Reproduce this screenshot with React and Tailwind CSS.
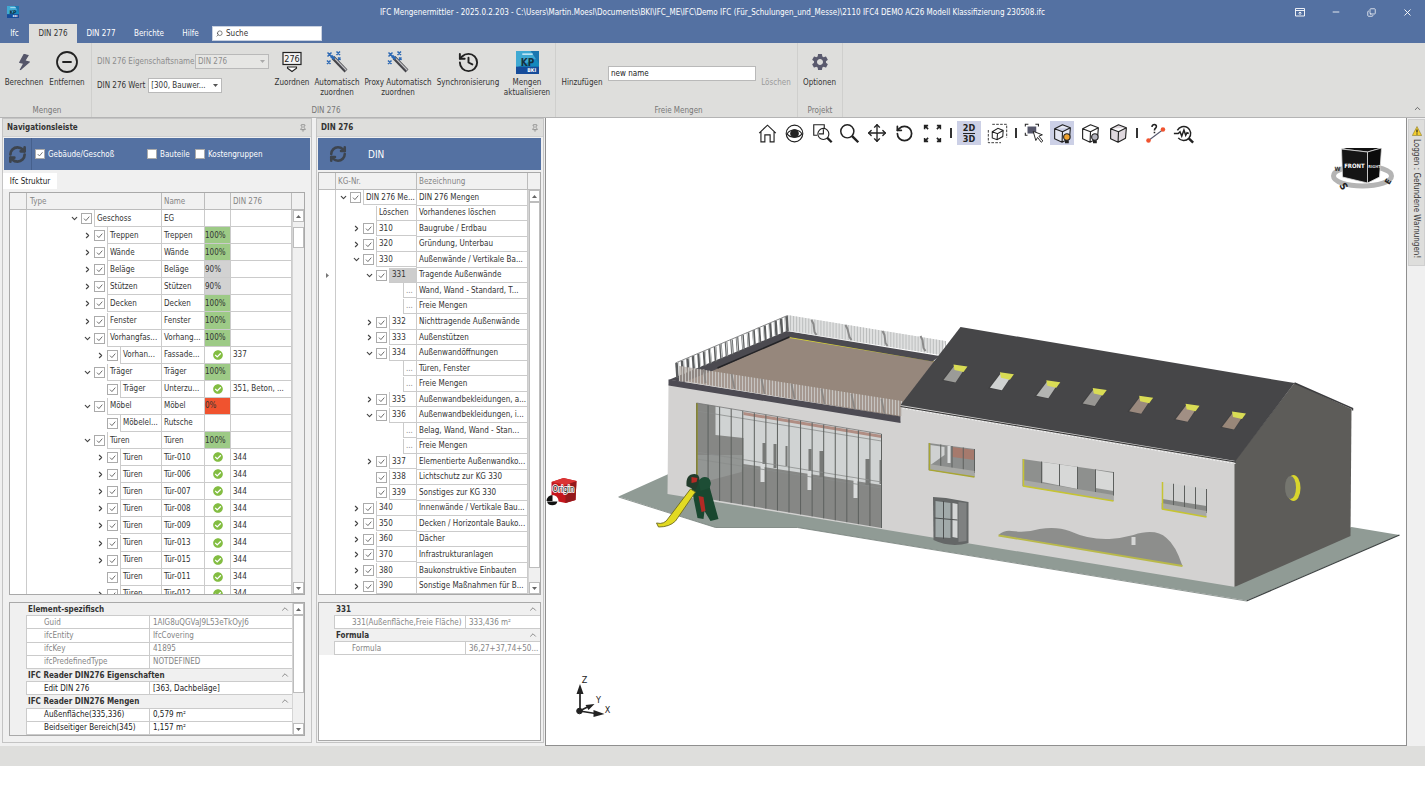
import React from 'react';
import { RefreshCw, CircleMinus, History, House, Search, Move, RotateCcw, ChevronDown, ChevronRight, ChevronUp, Pin, X, Minus, Copy } from 'lucide-react';
import { MdSettings } from 'react-icons/md';
import { BsLightningFill } from 'react-icons/bs';
import { FaCheckCircle } from 'react-icons/fa';

const NAV_ROWS = [
  { level: 0, open: true, type: 'Geschoss', name: 'EG' },
  { level: 1, open: false, type: 'Treppen', name: 'Treppen', pct: 100 },
  { level: 1, open: false, type: 'Wände', name: 'Wände', pct: 100 },
  { level: 1, open: false, type: 'Beläge', name: 'Beläge', pct: 90 },
  { level: 1, open: false, type: 'Stützen', name: 'Stützen', pct: 90 },
  { level: 1, open: false, type: 'Decken', name: 'Decken', pct: 100 },
  { level: 1, open: false, type: 'Fenster', name: 'Fenster', pct: 100 },
  { level: 1, open: true, type: 'Vorhangfas...', name: 'Vorhang...', pct: 100 },
  { level: 2, open: false, type: 'Vorhan...', name: 'Fassade...', ok: true, din: '337' },
  { level: 1, open: true, type: 'Träger', name: 'Träger', pct: 100 },
  { level: 2, type: 'Träger', name: 'Unterzu...', ok: true, din: '351, Beton, ...' },
  { level: 1, open: true, type: 'Möbel', name: 'Möbel', pct: 0 },
  { level: 2, type: 'Möbelel...', name: 'Rutsche' },
  { level: 1, open: true, type: 'Türen', name: 'Türen', pct: 100 },
  { level: 2, open: false, type: 'Türen', name: 'Tür-010', ok: true, din: '344' },
  { level: 2, open: false, type: 'Türen', name: 'Tür-006', ok: true, din: '344' },
  { level: 2, open: false, type: 'Türen', name: 'Tür-007', ok: true, din: '344' },
  { level: 2, open: false, type: 'Türen', name: 'Tür-008', ok: true, din: '344' },
  { level: 2, open: false, type: 'Türen', name: 'Tür-009', ok: true, din: '344' },
  { level: 2, open: false, type: 'Türen', name: 'Tür-013', ok: true, din: '344' },
  { level: 2, open: false, type: 'Türen', name: 'Tür-015', ok: true, din: '344' },
  { level: 2, type: 'Türen', name: 'Tür-011', ok: true, din: '344' },
  { level: 2, open: false, type: 'Türen', name: 'Tür-012', ok: true, din: '344' },
];

const DIN_ROWS = [
  { level: 0, open: true, check: true, nr: 'DIN 276 Me...', text: 'DIN 276 Mengen' },
  { level: 1, nr: 'Löschen', text: 'Vorhandenes löschen' },
  { level: 1, open: false, check: true, nr: '310', text: 'Baugrube / Erdbau' },
  { level: 1, open: false, check: true, nr: '320', text: 'Gründung, Unterbau' },
  { level: 1, open: true, check: true, nr: '330', text: 'Außenwände / Vertikale Ba...' },
  { level: 2, open: true, check: true, nr: '331', text: 'Tragende Außenwände', current: true },
  { level: 3, nr: '...', text: 'Wand, Wand - Standard, T...' },
  { level: 3, nr: '...', text: 'Freie Mengen' },
  { level: 2, open: false, check: true, nr: '332', text: 'Nichttragende Außenwände' },
  { level: 2, open: false, check: true, nr: '333', text: 'Außenstützen' },
  { level: 2, open: true, check: true, nr: '334', text: 'Außenwandöffnungen' },
  { level: 3, nr: '...', text: 'Türen, Fenster' },
  { level: 3, nr: '...', text: 'Freie Mengen' },
  { level: 2, open: false, check: true, nr: '335', text: 'Außenwandbekleidungen, a...' },
  { level: 2, open: true, check: true, nr: '336', text: 'Außenwandbekleidungen, i...' },
  { level: 3, nr: '...', text: 'Belag, Wand, Wand - Stan...' },
  { level: 3, nr: '...', text: 'Freie Mengen' },
  { level: 2, open: false, check: true, nr: '337', text: 'Elementierte Außenwandko...' },
  { level: 2, check: true, nr: '338', text: 'Lichtschutz zur KG 330' },
  { level: 2, check: true, nr: '339', text: 'Sonstiges zur KG 330' },
  { level: 1, open: false, check: true, nr: '340', text: 'Innenwände / Vertikale Bau...' },
  { level: 1, open: false, check: true, nr: '350', text: 'Decken / Horizontale Bauko...' },
  { level: 1, open: false, check: true, nr: '360', text: 'Dächer' },
  { level: 1, open: false, check: true, nr: '370', text: 'Infrastrukturanlagen' },
  { level: 1, open: false, check: true, nr: '380', text: 'Baukonstruktive Einbauten' },
  { level: 1, open: false, check: true, nr: '390', text: 'Sonstige Maßnahmen für B...' },
];

const ELEMENT_PROPS = [
  { group: 'Element-spezifisch' },
  { label: 'Guid', value: '1AIG8uQGVaJ9L53eTkOyJ6', readOnly: true },
  { label: 'ifcEntity', value: 'IfcCovering', readOnly: true },
  { label: 'ifcKey', value: '41895', readOnly: true },
  { label: 'ifcPredefinedType', value: 'NOTDEFINED', readOnly: true },
  { group: 'IFC Reader DIN276 Eigenschaften' },
  { label: 'Edit DIN 276', value: '[363, Dachbeläge]' },
  { group: 'IFC Reader DIN276 Mengen' },
  { label: 'Außenfläche(335,336)', value: '0,579 m²' },
  { label: 'Beidseitiger Bereich(345)', value: '1,157 m²' },
];

const DIN_PROPS = [
  { group: '331' },
  { label: '331(Außenfläche,Freie Fläche)', value: '333,436 m²', readOnly: true },
  { group: 'Formula' },
  { label: 'Formula', value: '36,27+37,74+50...', readOnly: true },
];

const INDENT = ['w-0', 'w-[13px]', 'w-[26px]', 'w-[40px]'];

const pctColor = (pct) => {
  if (pct === 100) return 'bg-[#9dca86]';
  if (pct === 0) return 'bg-[#f0532f]';
  return 'bg-[#d2d2d2]';
};

const Check = ({ label, size = 'size-[11px]', defaultChecked = true }) => (
  <span className={`relative block shrink-0 ${size}`}>
    <input
      type="checkbox"
      aria-label={label}
      defaultChecked={defaultChecked}
      className={`peer block appearance-none border border-[#ababab] bg-white ${size}`}
    />
    <svg viewBox="0 0 11 11" className="absolute inset-0 hidden size-full pointer-events-none peer-checked:block">
      <path d="M3 5.6 4.9 7.6 8.3 3.6" fill="none" stroke="#6e6e6e" strokeWidth="1" />
    </svg>
  </span>
);

const TreeCell = ({ row, text, check, current, base, rowH }) => (
  <div className={`flex items-stretch ${rowH}`}>
    <span className={`shrink-0 ${base}`} />
    <span className={`shrink-0 ${INDENT[row.level]}`} />
    <button className="w-[14px] shrink-0 flex items-center justify-center text-[#444]">
      {row.open === true && <ChevronDown className="size-[9px]" strokeWidth={3} />}
      {row.open === false && <ChevronRight className="size-[9px]" strokeWidth={3} />}
    </button>
    <span className="w-[13px] shrink-0 flex items-center">{check && <Check label={text} />}</span>
    <span
      className={`flex-1 min-w-0 flex items-center border-l border-b border-[#cbcbcb] pl-[2px] overflow-hidden ${
        current ? 'bg-[#cdcdcd]' : ''
      } ${text === '...' ? 'text-[#8a8a8a]' : ''}`}
    >
      {text}
    </span>
  </div>
);

const ScrollBar = ({ thumb }) => (
  <div className="flex flex-col bg-[#f0f0f0] w-[12px] shrink-0 border-l border-[#d5d5d5]">
    <button aria-label="Nach oben" className="h-[12px] shrink-0 bg-white border border-[#bdbdbd] flex items-center justify-center">
      <svg viewBox="0 0 5 3" className="w-[5px] h-[3px]"><path d="M0 3 2.5 0 5 3z" fill="#666" /></svg>
    </button>
    <div className="flex-1 flex flex-col">
      <div className={`bg-white border border-[#bdbdbd] ${thumb}`} />
    </div>
    <button aria-label="Nach unten" className="h-[12px] shrink-0 bg-white border border-[#bdbdbd] flex items-center justify-center">
      <svg viewBox="0 0 5 3" className="w-[5px] h-[3px]"><path d="M0 0 2.5 3 5 0z" fill="#666" /></svg>
    </button>
  </div>
);

const PropertyGrid = ({ rows, labelWidth, gutter, indent, height }) => (
  <table className={`w-full table-fixed border-separate border-spacing-0 bg-white ${height}`}>
    <colgroup>
      <col className={gutter} />
      <col className={labelWidth} />
      <col />
    </colgroup>
    <tbody>
      {rows.map((row, i) =>
        row.group ? (
          <tr key={i} className="bg-[#f0f0f0]">
            <td className="p-0 h-[13px]" />
            <th colSpan={2} className="p-0 pl-[2px] pr-[2px] border-b border-[#cbcbcb] text-left font-bold text-[#333]">
              <div className="flex items-center justify-between">
                {row.group}
                <ChevronUp className="size-[10px] text-[#777]" />
              </div>
            </th>
          </tr>
        ) : (
          <tr key={i} className={row.readOnly ? 'text-[#858585]' : 'text-[#222]'}>
            <td className="p-0 h-[13px] bg-[#f0f0f0]" />
            <td className={`p-0 border-l border-b border-[#cbcbcb] ${indent}`}>{row.label}</td>
            <td className="p-0 pl-[3px] border-l border-b border-[#cbcbcb]">{row.value}</td>
          </tr>
        )
      )}
    </tbody>
  </table>
);

const PanelHeader = ({ title }) => (
  <div className="h-[18px] shrink-0 flex items-center justify-between px-1 bg-[#dededc] border-b border-[#d0d0d0]">
    <h2 className="font-bold text-[#333]">{title}</h2>
    <button aria-label="Anheften"><Pin className="size-[8px] text-[#777]" /></button>
  </div>
);

const RibbonButton = ({ icon, lines, width, disabled }) => (
  <button
    disabled={disabled}
    className={`${width} shrink-0 flex flex-col items-center leading-[10px] text-[#333] disabled:text-[#9b9b9b]`}
  >
    <span className="h-[26px] flex items-center justify-center">{icon}</span>
    <span className="h-[10px] mt-[3px] whitespace-nowrap">{lines[0]}</span>
    {lines[1] && <span className="whitespace-nowrap">{lines[1]}</span>}
  </button>
);

const RibbonGroup = ({ caption, width, children }) => (
  <section className={`${width} shrink-0 flex flex-col border-r border-[#cfcfcd] pt-[6px]`}>
    <div className="flex-1 flex">{children}</div>
    <div className="h-[11px] text-center leading-[10px] text-[#777]">{caption}</div>
  </section>
);

const WandIcon = () => (
  <svg viewBox="0 0 22 22" className="size-[22px]">
    <path d="M7 6.500 20 20" stroke="#45454a" strokeWidth="4" />
    <path d="M8 6.600 20.300 19.200" stroke="#c4c4c8" strokeWidth="1.300" />
    <path d="M5 4.800 8.500 8" stroke="#2d69b4" strokeWidth="3" />
    <path d="M1.500 1.500l4 4m0-4-4 4M10.500.5l3.500 3.500m0-3.500-3.500 3.500M1 9.500l3.500 3.500m0-3.500L1 13M12 6.500l2.500 2.500m0-2.500L12 9" stroke="#2d69b4" strokeWidth="1.500" fill="none" />
  </svg>
);

const AssignIcon = () => (
  <svg viewBox="0 0 22 22" className="size-[22px]">
    <rect x="2" y="1.500" width="18" height="12" fill="#f5f5f5" stroke="#222" strokeWidth="1.200" />
    <text x="11" y="10.800" fontSize="9" textAnchor="middle" fill="#222">276</text>
    <path d="M6.500 16h9v1.200L11 20.500l-4.500-3.300z" fill="#fff" stroke="#222" strokeWidth="1.100" />
  </svg>
);

const BkiIcon = ({ size }) => (
  <svg viewBox="0 0 22 22" className={size}>
    <rect width="22" height="22" rx="1" fill="#1689bd" />
    <path d="M0 0h22v6L0 16z" fill="#3fa9d3" />
    <path d="M14 0h8v12z" fill="#1b76b0" />
    <path d="M0 15h22v7H0z" fill="#164c9a" />
    <path d="M6 3h10" stroke="#d9f2fb" strokeWidth="1.300" />
    <text x="11" y="14" fontSize="9.500" fontWeight="bold" textAnchor="middle" fill="#16313f">KP</text>
    <text x="15" y="20.500" fontSize="5" fontWeight="bold" textAnchor="middle" fill="#fff">BKI</text>
  </svg>
);

const TitleBar = () => (
  <header className="bg-[#5471a2] text-white h-[43px] shrink-0 flex flex-col">
    <div className="h-[24px] grid grid-cols-[1fr_auto_1fr] items-center">
      <div className="pl-[7px]"><BkiIcon size="size-[12px]" /></div>
      <h1 className="whitespace-nowrap">
        IFC Mengenermittler - 2025.0.2.203 - C:\Users\Martin.Moesl\Documents\BKI\IFC_ME\IFC\Demo IFC (Für_Schulungen_und_Messe)\2110 IFC4 DEMO AC26 Modell Klassifizierung 230508.ifc
      </h1>
      <div className="flex justify-end items-center gap-[26px] pr-3">
        <button aria-label="Menüband-Anzeige">
          <svg viewBox="0 0 10 10" className="size-[10px]" fill="none" stroke="#fff">
            <path d="M.5 1.500h9v7.500h-9zM.5 3.500h9M5 8V5M3.500 6.300 5 5l1.500 1.300" strokeWidth=".9" />
          </svg>
        </button>
        <button aria-label="Minimieren"><Minus className="size-[10px]" /></button>
        <button aria-label="Wiederherstellen"><Copy className="size-[9px] -scale-y-100" /></button>
        <button aria-label="Schließen"><X className="size-[11px]" /></button>
      </div>
    </div>
    <nav className="flex-1 flex">
      <button className="w-[29px]">Ifc</button>
      <button className="w-[48px] bg-[#dededc] text-[#333]">DIN 276</button>
      <button className="w-[48px]">DIN 277</button>
      <button className="w-[48px]">Berichte</button>
      <button className="w-[35px]">Hilfe</button>
      <label className="ml-1 mt-[2px] w-[110px] h-[15px] bg-white text-[#333] flex items-center gap-[3px] px-[3px] border border-[#c9d1e0]">
        <Search className="size-[7px] -scale-x-100 shrink-0" />
        <input aria-label="Suche" defaultValue="Suche" className="w-full min-w-0 outline-none" />
      </label>
    </nav>
  </header>
);

const Ribbon = () => (
  <div className="relative h-[75px] shrink-0 bg-[#dededc] flex border-b border-[#b4b4b4]">
    <RibbonGroup caption="Mengen" width="w-[92px] pl-[3px]">
      <RibbonButton width="w-[42px]" icon={<BsLightningFill className="size-[17px] rotate-12 text-[#55566a]" />} lines={['Berechnen']} />
      <RibbonButton width="w-[44px]" icon={<CircleMinus className="size-[24px] text-[#222]" strokeWidth={1.8} />} lines={['Entfernen']} />
    </RibbonGroup>
    <RibbonGroup caption="DIN 276" width="w-[464px] pl-[5px]">
      <div className="w-[172px] mr-[3px] pt-[5px] flex flex-col gap-[9px]">
        <div className="flex items-center text-[#8d8d8d]">
          <label htmlFor="propName" className="whitespace-nowrap flex-1">DIN 276 Eigenschaftsname</label>
          <span className="relative block">
            <select id="propName" disabled className="block appearance-none w-[74px] h-[15px] pl-[2px] border border-[#b9b9b9] bg-[#e6e6e4]">
              <option>DIN 276</option>
            </select>
            <svg viewBox="0 0 5 3" className="absolute right-[4px] top-[6px] w-[5px] h-[3px] pointer-events-none"><path d="M0 0 2.500 3 5 0z" fill="#aaa" /></svg>
          </span>
        </div>
        <div className="flex items-center gap-[3px] text-[#333]">
          <label htmlFor="propValue" className="whitespace-nowrap">DIN 276 Wert</label>
          <span className="relative block">
            <select id="propValue" className="block appearance-none w-[74px] h-[15px] pl-[2px] border border-[#b9b9b9] bg-white">
              <option>[300, Bauwer...</option>
            </select>
            <svg viewBox="0 0 5 3" className="absolute right-[4px] top-[6px] w-[5px] h-[3px] pointer-events-none"><path d="M0 0 2.500 3 5 0z" fill="#555" /></svg>
          </span>
        </div>
      </div>
      <RibbonButton width="w-[40px]" icon={<AssignIcon />} lines={['Zuordnen']} />
      <RibbonButton width="w-[50px]" icon={<WandIcon />} lines={['Automatisch', 'zuordnen']} />
      <RibbonButton width="w-[72px]" icon={<WandIcon />} lines={['Proxy Automatisch', 'zuordnen']} />
      <RibbonButton width="w-[68px]" icon={<History className="size-[23px] text-[#222]" strokeWidth={2} />} lines={['Synchronisierung']} />
      <RibbonButton width="w-[50px]" icon={<BkiIcon size="size-[23px]" />} lines={['Mengen', 'aktualisieren']} />
    </RibbonGroup>
    <RibbonGroup caption="Freie Mengen" width="w-[242px] pl-1">
      <RibbonButton width="w-[44px]" lines={['Hinzufügen']} />
      <input aria-label="Name der freien Menge" defaultValue="new name" className="ml-1 mr-[2px] mt-[17px] w-[148px] h-[15px] px-[2px] bg-white border border-[#b9b9b9] text-[#222]" />
      <RibbonButton width="w-[36px]" lines={['Löschen']} disabled />
    </RibbonGroup>
    <RibbonGroup caption="Projekt" width="w-[45px]">
      <RibbonButton width="w-[43px]" icon={<MdSettings className="size-[20px] text-[#5a5a6e]" />} lines={['Optionen']} />
    </RibbonGroup>
    <button aria-label="Menüband reduzieren" className="absolute right-[3px] bottom-1"><ChevronUp className="size-[9px] text-[#444]" /></button>
  </div>
);

const TH = 'p-0 h-[17px] text-left font-normal text-[#858585] bg-[#f1f1f1] border-b border-r border-[#bcbcbc]';
const TD = 'p-0 border-b border-r border-[#cbcbcb]';

const NavigationPanel = () => (
  <aside className="w-[310px] shrink-0 flex flex-col bg-[#f0f0f0] border border-[#c4c4c4]">
    <PanelHeader title="Navigationsleiste" />
    <div className="m-px h-[32px] shrink-0 bg-[#5471a2] text-white flex items-center">
      <button aria-label="Aktualisieren" className="w-[28px] h-full border-r border-[#46608c] flex items-center justify-center">
        <RefreshCw className="size-[19px] text-[#3d444e]" strokeWidth={3.4} />
      </button>
      <label className="flex items-center gap-[3px] ml-[3px] w-[112px]"><Check size="size-[10px]" />Gebäude/Geschoß</label>
      <label className="flex items-center gap-[3px] w-[48px]"><Check size="size-[10px]" defaultChecked={false} />Bauteile</label>
      <label className="flex items-center gap-[3px]"><Check size="size-[10px]" defaultChecked={false} />Kostengruppen</label>
    </div>
    <div className="flex h-[18px] shrink-0 items-end">
      <button className="h-[16px] w-[54px] bg-white text-[#222]">Ifc Struktur</button>
    </div>
    <div className="flex-1 min-h-0 pt-[3px] px-[6px] pb-[6px] flex flex-col gap-[7px]">
      <div className="flex-1 min-h-0 overflow-hidden border border-[#a9a9a9] bg-white flex flex-col">
        <div className="flex bg-[#f1f1f1]">
          <table className="flex-1 table-fixed border-separate border-spacing-0">
            <colgroup><col className="w-[17px]" /><col className="w-[135px]" /><col className="w-[43px]" /><col className="w-[26px]" /><col /></colgroup>
            <thead>
              <tr>
                <th className={TH} />
                <th className={`${TH} pl-[3px]`}>Type</th>
                <th className={`${TH} pl-[2px]`}>Name</th>
                <th className={TH} />
                <th className={`${TH} pl-[2px]`}>DIN 276</th>
              </tr>
            </thead>
          </table>
          <div className="w-[12px] shrink-0 border-b border-[#bcbcbc]" />
        </div>
        <div className="flex-1 min-h-0 flex">
          <div className="flex-1 min-w-0 overflow-hidden">
            <table className="w-full h-[393px] table-fixed border-separate border-spacing-0 text-[#333]">
              <colgroup><col className="w-[17px]" /><col className="w-[135px]" /><col className="w-[43px]" /><col className="w-[26px]" /><col /></colgroup>
              <tbody>
                {NAV_ROWS.map((row, i) => (
                  <tr key={i}>
                    <td className="p-0 border-r border-[#cbcbcb]" />
                    <td className="p-0 border-r border-[#cbcbcb]">
                      <TreeCell row={row} text={row.type} check base="w-[40px]" rowH="h-[17px]" />
                    </td>
                    <td className={`${TD} pl-[2px]`}>{row.name}</td>
                    <td className={`${TD} ${row.pct !== undefined ? pctColor(row.pct) : ''}`}>
                      {row.pct !== undefined && `${row.pct}%`}
                      {row.ok && <FaCheckCircle className="mx-auto size-[10px] text-[#83bd42]" />}
                    </td>
                    <td className={`${TD} pl-[2px]`}>{row.din}</td>
                  </tr>
                ))}
              </tbody>
            </table>
          </div>
          <ScrollBar thumb="mt-[5px] h-[21px]" />
        </div>
      </div>
      <div className="h-[134px] shrink-0 flex border border-[#a9a9a9]">
        <div className="flex-1 min-w-0">
          <PropertyGrid rows={ELEMENT_PROPS} gutter="w-[16px]" labelWidth="w-[123px]" indent="pl-[17px]" height="h-full" />
        </div>
        <ScrollBar thumb="h-[78px]" />
      </div>
    </div>
  </aside>
);

const DinPanel = () => (
  <aside className="w-[228px] shrink-0 flex flex-col bg-[#f0f0f0] border border-[#c4c4c4]">
    <PanelHeader title="DIN 276" />
    <div className="m-px mr-[2px] h-[32px] shrink-0 bg-[#5471a2] text-white flex items-center">
      <button aria-label="Aktualisieren" className="w-[40px] h-full flex items-center justify-center">
        <RefreshCw className="size-[18px] text-[#3d444e]" strokeWidth={3.4} />
      </button>
      <span className="ml-[10px] text-[10px]">DIN</span>
    </div>
    <div className="flex-1 min-h-0 pt-px pl-px pr-[2px] pb-px flex flex-col gap-[7px]">
      <div className="flex-1 min-h-0 overflow-hidden border border-[#a9a9a9] bg-white flex flex-col">
        <div className="flex bg-[#f1f1f1]">
          <table className="flex-1 table-fixed border-separate border-spacing-0">
            <colgroup><col className="w-[17px]" /><col className="w-[81px]" /><col /></colgroup>
            <thead>
              <tr>
                <th className={TH} />
                <th className={`${TH} pl-[2px]`}>KG-Nr.</th>
                <th className={`${TH} pl-[2px]`}>Bezeichnung</th>
              </tr>
            </thead>
          </table>
          <div className="w-[12px] shrink-0 border-b border-[#bcbcbc]" />
        </div>
        <div className="flex-1 min-h-0 flex">
          <div className="flex-1 min-w-0 overflow-hidden">
            <table className="w-full h-full table-fixed border-separate border-spacing-0 text-[#333]">
              <colgroup><col className="w-[17px]" /><col className="w-[81px]" /><col /></colgroup>
              <tbody>
                {DIN_ROWS.map((row, i) => (
                  <tr key={i}>
                    <td className="p-0 border-r border-[#cbcbcb]">
                      {row.current && (
                        <svg viewBox="0 0 3 5" className="mx-auto w-[3px] h-[5px]"><path d="M0 0 3 2.500 0 5z" fill="#777" /></svg>
                      )}
                    </td>
                    <td className="p-0 border-r border-[#cbcbcb]">
                      <TreeCell row={row} text={row.nr} check={row.check} current={row.current} base="w-0" rowH="h-[15px]" />
                    </td>
                    <td className={`${TD} pl-[2px] whitespace-nowrap`}>{row.text}</td>
                  </tr>
                ))}
              </tbody>
            </table>
          </div>
          <ScrollBar thumb="flex-1 mb-[14px]" />
        </div>
      </div>
      <div className="h-[139px] shrink-0 border border-[#a9a9a9] bg-white">
        <PropertyGrid rows={DIN_PROPS} gutter="w-[15px]" labelWidth="w-[131px]" indent="pl-[17px]" height="" />
      </div>
    </div>
  </aside>
);

const Tool = ({ label, active, children }) => (
  <button aria-label={label} className={`size-[24px] flex items-center justify-center text-[#222] ${active ? 'bg-[#ccd0e6]' : ''}`}>
    {children}
  </button>
);

const ToolSep = () => <span className="w-[5px] flex justify-center"><span className="w-[2px] h-[10px] bg-[#333]" /></span>;

const Draw = ({ children }) => (
  <svg viewBox="0 0 24 24" className="size-[21px]" fill="none" stroke="#222" strokeWidth="1.300">{children}</svg>
);

const Cube = ({ fill = 'none' }) => (
  <path d="M3 6.500 12 2l9 3.500-1 12-8.500 4.500L3 18zM3 6.500l9 3.500 9-4.500M12 10l-.5 12" fill={fill} strokeLinejoin="round" />
);

const ViewToolbar = () => (
  <div className="h-[30px] shrink-0 flex items-center justify-center gap-1 pr-[2px]">
    <div className="w-[189px] flex justify-between">
      <Tool label="Startansicht">
        <Draw><path d="M2.500 11.500 12 2.500l9.500 9M4.500 10v11.500h4.500v-8h6v8h4.500V10" /></Draw>
      </Tool>
      <Tool label="Sichtbarkeit">
        <Draw>
          <circle cx="12" cy="12" r="9.500" />
          <path d="M3.500 12.500C7 6.500 17 6.500 20.500 12.500 17 17.500 7 17.500 3.500 12.500z" />
          <circle cx="12" cy="12" r="4.300" fill="#222" />
        </Draw>
      </Tool>
      <Tool label="Fenster vergrößern">
        <Draw><path d="M14 6V2H2v12h4" /><circle cx="13" cy="12.500" r="6.300" /><path d="M13 7v5.500H8" /><path d="m17.500 17 5 5" strokeWidth="2.600" /></Draw>
      </Tool>
      <Tool label="Vergrößern">
        <Draw><circle cx="9.500" cy="9.500" r="7.500" strokeWidth="1.700" /><path d="m15 15 7 7" strokeWidth="2.800" /></Draw>
      </Tool>
      <Tool label="Verschieben"><Move className="size-[20px]" strokeWidth={1.6} /></Tool>
      <Tool label="Drehen"><RotateCcw className="size-[19px]" strokeWidth={2.2} /></Tool>
      <Tool label="Alles anzeigen">
        <Draw><path d="M3 7V3h4M3 3l4 4M21 7V3h-4M21 3l-4 4M3 17v4h4M3 21l4-4M21 17v4h-4M21 21l-4-4" strokeWidth="1.800" /></Draw>
      </Tool>
    </div>
    <ToolSep />
    <Tool label="2D/3D" active>
      <span className="flex flex-col text-[9px] leading-[10px] font-bold">
        <span className="border-b border-[#222]">2D</span>
        <span>3D</span>
      </span>
    </Tool>
    <Tool label="Auswahlbox">
      <Draw>
        <path d="M6 1.500h16.500V17M1.500 8v14.500H16" strokeDasharray="3 1.500" strokeWidth="1" />
        <path d="M6 10l6.500-4 6 2.500-.5 7-6.500 3.500L6 17zM6 10l6 2.200 6.500-3.700M12 12.200l-.5 6.800" strokeWidth="1.200" />
      </Draw>
    </Tool>
    <ToolSep />
    <Tool label="Auswählen">
      <Draw>
        <path d="M1.500 4V1.500H5M13 1.500h3.500V4M1.500 11v3H4" strokeWidth="1.200" />
        <path d="M4 4h10v8H4z" fill="#55566a" stroke="none" />
        <path d="m10.500 9.500 10.500 4-4 1.500 4.500 5.500-1.800 1.500-4.200-5.500-2 3.500z" fill="#fff" strokeWidth="1.100" />
      </Draw>
    </Tool>
    <Tool label="Beleuchtung an" active>
      <Draw><Cube fill="#e4e6f2" /><circle cx="17" cy="16" r="3.700" fill="#f0a330" /><path d="M15.500 20.500h3v2h-3z" fill="#222" /></Draw>
    </Tool>
    <Tool label="Beleuchtung aus">
      <Draw><Cube fill="#fff" /><circle cx="17" cy="16" r="3.700" fill="#b3b3bd" /><path d="M15.500 20.500h3v2h-3z" fill="#222" /></Draw>
    </Tool>
    <Tool label="Schattierung"><Draw><Cube fill="#dfd8de" /></Draw></Tool>
    <ToolSep />
    <Tool label="Messen">
      <Draw>
        <path d="M4 20 20 8" stroke="#555a70" />
        <circle cx="4" cy="20" r="2.600" fill="#f0532f" stroke="none" />
        <circle cx="20.500" cy="7.500" r="2.600" fill="#f0532f" stroke="none" />
        <path d="M8 4.500C8 .8 13.500 1 13 4.300 12.800 6 10.800 6 10.800 8.500M10.800 10v1.800" strokeWidth="1.800" />
      </Draw>
    </Tool>
    <Tool label="Analyse">
      <Draw>
        <path d="M5 8.500a8 8 0 1 1 1 8.500M1 12h5l2-2 2 5 2.500-7 2 6 1.500-3 2 1" strokeWidth="1.700" />
        <path d="m18 17.500 5 5" strokeWidth="2.800" />
      </Draw>
    </Tool>
  </div>
);

const SKYLIGHTS = ['#9b9b98', '#d0d2d2', '#b3b4b2', '#989693', '#9a897e', '#a18f84', '#998779'];

const lerp = (a, b, t) => a + (b - a) * t;

// row of vertical balusters between two sloping edges
const Rail = ({ from, to, height, count, stroke, width, lean = 0 }) =>
  Array.from({ length: count + 1 }, (_, i) => {
    const x = lerp(from[0], to[0], i / count);
    const y = lerp(from[1], to[1], i / count);
    return <path key={i} d={`M${x} ${y}L${x + lean} ${y + height}`} stroke={stroke} strokeWidth={width} />;
  });

const Mullions = ({ x0, x1, y0, y1, h, count }) => <Rail from={[x0, y0]} to={[x1, y1]} height={h} count={count} stroke="#5d605e" width={1} />;

const Building = () => (
  <g>
    <path d="M619 496.500 669 474l20 20 546 80 117-47 48 8L1247 600.500 798 527.500H716z" fill="#909b95" />
    <path d="M1247 601 1400 535" stroke="#3f4444" strokeWidth="1.300" />
    <path d="M619 497 716 527.500H798L1247 601" stroke="#747d79" strokeWidth=".8" fill="none" />

    {/* roof terrace */}
    <path d="M680 380 790 336l146 25-25 43-10 13z" fill="#96877c" />
    <path d="M790 337.500 934 361" stroke="#d6d233" strokeWidth="1.200" />
    <path d="M669 380 787 331l153 25-7 5.500L790 337l-75 33-30 12z" fill="#4b4a50" />
    <path d="M718 368 790 337" stroke="#242427" strokeWidth="1.500" />
    <path d="m788 315 158 26-4 14-154-24z" fill="#dfe0e0" />
    <Rail from={[788, 315]} to={[946, 341]} height={15} count={52} stroke="#bcbebe" width={1} />
    <path d="m812 320 2 4 1 8 2 3m29-10 2 4 2 8 2 3m31-9 2 4 1 8 2 3m33-10 2 4 1 8 2 3" stroke="#8a8a8a" strokeWidth="2" fill="none" />
    <Rail from={[677, 363]} to={[787, 316]} height={15} count={20} stroke="#5b5d5e" width={2.6} lean={1} />
    <Rail from={[679, 362]} to={[785, 317]} height={14} count={20} stroke="#c9cccc" width={1} lean={1} />
    <path d="M676 363 788 315.500" stroke="#88898a" strokeWidth="1" />

    {/* facade */}
    <path d="M669 384 901 421v-17l335 57v126L668 494z" fill="#d3d2d1" />
    <path d="M669 379.500 901 416.500V423L669 385.500z" fill="#4d4b53" />
    <path d="M680 366 902 401v15L680 381z" fill="#a89e96" opacity=".7" />
    <Rail from={[680, 366]} to={[902, 401]} height={15} count={74} stroke="#c6c4c1" width={1.1} />
    <path d="m704 369 1 5 1 9m26-9 1 5 2 10m27-10 1 5 2 10m27-10 1 5 2 10m27-10 1 5 2 10m27-10 1 5 2 10m27-10 1 5 2 10" stroke="#8a8784" strokeWidth="1.800" fill="none" />

    {/* curtain wall */}
    <path d="M697 403 882 434v94L697 497z" fill="#d0d3d3" />
    <path d="M697 403 716 406v29l28 3v26l138 21v43L697 497z" fill="#868785" />
    <path d="M697 455h47l-2 17-45 12z" fill="#9da09f" opacity=".6" />
    <path d="m744 412 138 23v3l-138-23z" fill="#b08d83" />
    <path d="M761 460h4v22h-4zM808 470h4v20h-4zM854 478h4v20h-4z" fill="#d9dbdb" />
    <path d="M763 443h3v21h-3zM774 444h3v24h-3zM786 446h2v20h-2zM809 449h3v22h-3zM820 451h4v26h-4zM866 459h4v26h-4zM880 460h2v24h-2z" fill="#777977" />
    <path d="M697 411 882 441M697 452 882 482M697 459 882 488" stroke="#8a8d8c" strokeWidth=".8" />
    <Mullions x0={697} x1={882} y0={403} y1={434} h={94} count={16} />
    <path d="M697.500 403v72" stroke="#8e8c32" strokeWidth="1.500" />
    <path d="M697 403 882 434" stroke="#777" strokeWidth=".8" />

    {/* main roof and gable */}
    <path d="m1235 461 60-78 57 26-1 127-116 51z" fill="#5d5c59" />
    <path d="m961 327 334 56-59 78-335-56z" fill="#464648" />
    <path d="m1295 383 58 25.500v2" stroke="#3c3c3e" strokeWidth="1.500" fill="none" />
    <path d="m903 408 333 55.500" stroke="#f0f0f0" strokeWidth="1.200" strokeDasharray="2 1.500" />
    <path d="m901 406.500 335 55.500" stroke="#333" strokeWidth="1" />
    {SKYLIGHTS.map((fill, i) => (
      <g key={i} transform={`translate(${lerp(955, 1233.5, i / 6)} ${lerp(373.500, 420.500, i / 6)})`}>
        <path d="M0-9-13 7 1 9.500 13-7z" fill="#3b3c3c" opacity=".5" />
        <path d="M0-8-11 6.500 1 9 11-6z" fill={fill} />
        <path d="m-1-9 14 2-4 5.500-9-2z" fill="#d9dc55" />
      </g>
    ))}

    {/* windows */}
    <path d="m929 443 46 6v28l-46-7z" fill="#8c8e8d" />
    <path d="m931 445 14 2v8l-14 10z" fill="#cfd1d1" />
    <path d="m953 447 22 3v10l-22-3z" fill="#a67a6d" />
    <path d="M948 446h3v17h-3z" fill="#dcdede" />
    <Mullions x0={930} x1={975} y0={443} y1={449} h={24} count={4} />
    <path d="m929 464 46 7v6l-46-7z" fill="#a8a9a6" />
    <path d="M930 443v27l45 7" stroke="#a8a632" strokeWidth="1.400" fill="none" />

    <path d="m1023 459 91 13v29l-91-15z" fill="#8e908e" />
    <path d="m1043 462 35 5v22l-35-7zM1096 470l18 3v18l-18-3z" fill="#d7d8d7" />
    <Mullions x0={1024} x1={1114} y0={459} y1={472} h={24} count={5} />
    <path d="m1023 480 91 15v6l-91-15z" fill="#a8a9a6" />
    <path d="M1024 459v27l90 15" stroke="#c6c432" strokeWidth="1.500" fill="none" />

    <path d="m1162 482 45 7v28l-45-8z" fill="#cfd0cf" />
    <path d="m1163 499 44 7v7l-44-7z" fill="#868886" />
    <Mullions x0={1163} x1={1207} y0={482} y1={489} h={24} count={4} />
    <path d="m1162 503 45 8v6l-45-8z" fill="#a8a9a6" />
    <path d="M1163 482v27l44 8" stroke="#c6c432" strokeWidth="1.500" fill="none" />

    {/* revolving door */}
    <path d="m933.500 497 13 1 22.500 4v41q-18 5-35-3z" fill="#646767" />
    <path d="m936 501 15 2v35l-15-1z" fill="#a1aaaa" />
    <path d="m953 503 5 1v34l-5-1z" fill="#d4d6d6" />
    <path d="m959 502 8 1v38l-8 1z" fill="#7f8181" />
    <path d="m935 518 23 2M944 501v38" stroke="#4d5050" strokeWidth="1" />

    {/* wave shaped opening */}
    <path d="M999 535q6-5 13-4 15 2 28-2 17-3 30 2 20 9 40 8 13-1 24-4 22-7 33 3 9 7 16 28z" fill="#8d8e8c" />
    <path d="M1132 537h4v8h-4z" fill="#d6d7d6" />
    <path d="m999 535.500 184 30.500" stroke="#b9b94a" strokeWidth="1.800" />

    <ellipse cx="1294" cy="488" rx="7" ry="13" fill="#d9d62c" />
    <ellipse cx="1291" cy="487.500" rx="5.500" ry="11.500" fill="#75766f" />
  </g>
);

const Slide = () => (
  <g>
    <path d="m692 488 6 30 6 1 1-8 6 10 8-2-10-36q-6-6-11-2z" fill="#19472f" />
    <path d="M687 486q-1-12 8-12 5 0 5 6l-4 10z" fill="#223c2b" />
    <path d="M699 481q4-6 10-3 4 4 1 10l-9 3z" fill="#1d4d35" />
    <path d="m692 477 6 1-1 4-5 1zM699 496l5 1 2 14-4 1z" fill="#b32a25" />
    <path d="M657 523q8 2 12-5l22-29 5 3-20 29q-6 6-17 6z" fill="#e2da22" stroke="#6d6a1f" strokeWidth=".9" />
  </g>
);

const NavCube = () => (
  <g>
    <ellipse cx="1363" cy="176" rx="29" ry="10" fill="none" stroke="#b4b4b4" strokeWidth="5" />
    <path d="m1342 149 14-4 26 3-14 4z" fill="#111" stroke="#ddd" strokeWidth=".8" />
    <path d="m1342 149 26 3v31l-25-6z" fill="#151515" stroke="#ddd" strokeWidth=".8" />
    <path d="m1368 152 14-4-2 29-12 6z" fill="#0b0b0b" stroke="#ddd" strokeWidth=".8" />
    <text x="1355" y="168" fontSize="6" fontWeight="bold" textAnchor="middle" fill="#fff">FRONT</text>
    <text x="1375" y="168" fontSize="4" fontWeight="bold" textAnchor="middle" fill="#ddd">RIGHT</text>
    <text x="0" y="0" transform="translate(1341 188) rotate(60)" fontSize="10" fontWeight="bold" textAnchor="middle" fill="#222">S</text>
    <text x="1338" y="171" fontSize="6" fontWeight="bold" textAnchor="middle" fill="#333">W</text>
    <text x="0" y="0" transform="translate(1391 183) rotate(-60)" fontSize="8" fontWeight="bold" textAnchor="middle" fill="#222">E</text>
  </g>
);

const OriginMarker = () => (
  <g>
    <path d="m552 482 12-4 13 3-1 19-10 3-14-3z" fill="#c4161c" />
    <path d="m566 485 11-4-1 19-10 3z" fill="#94191c" />
    <path d="m552 482 12-4 13 3-11 4z" fill="#db3434" />
    <circle cx="553" cy="501" r="6" fill="#fff" />
    <path d="M553 501v-6a6 6 0 0 0-6 6z" fill="#111" />
    <path d="M547.500 501.500a5.500 5.500 0 0 0 10.500 0z" fill="#111" />
    <text x="564" y="492" fontSize="8" textAnchor="middle" fill="#222" stroke="#fff" strokeWidth="1.500" paintOrder="stroke">Origin</text>
  </g>
);

const AxisTriad = () => (
  <g fill="#222" stroke="#222">
    <circle cx="580" cy="711" r="2.800" />
    <path d="M580.500 711v-18M580 711l16 2.500M580 711l8-4" strokeWidth="1.700" fill="none" />
    <path d="m580.500 684-3.500 10h7zM605 714l-11-4v7zM595 704l-9 1 3 5z" stroke="none" />
    <g stroke="none" fontSize="9" textAnchor="middle">
      <text x="585" y="683">Z</text>
      <text x="599" y="703">Y</text>
      <text x="608" y="713">X</text>
    </g>
  </g>
);

const Viewport = () => (
  <main className="flex-1 min-w-0 bg-white border border-[#8f8f8f] border-t-0 flex flex-col">
    <ViewToolbar />
    <svg viewBox="547 148 859 597" className="flex-1 min-h-0 w-full">
      <NavCube />
      <Building />
      <Slide />
      <OriginMarker />
      <AxisTriad />
    </svg>
  </main>
);

const DockStrip = () => (
  <div className="w-[18px] shrink-0 bg-[#f0f0f0]">
    <button className="mt-px ml-px w-[17px] h-[147px] bg-[#dededc] border border-[#cfcfcf] flex flex-col items-center pt-[6px] gap-[3px]">
      <svg viewBox="0 0 10 10" className="size-[10px] shrink-0">
        <path d="M5 .5 9.700 9.500H.3z" fill="#f4cf2e" stroke="#7a6a1c" strokeWidth=".5" />
        <path d="M5 3.500v3M5 7.500v1" stroke="#222" strokeWidth="1.200" />
      </svg>
      <span className="[writing-mode:vertical-rl] whitespace-nowrap text-[#333]">Loggen : Gefundene Warnungen!</span>
    </button>
  </div>
);

export default function App() {
  return (
    <div className="h-screen bg-white pb-[34px] font-['DejaVu_Sans_Condensed','Noto_Sans',sans-serif] text-[8px] leading-[11px]">
      <div className="h-full flex flex-col bg-[#f0f0f0]">
        <TitleBar />
        <Ribbon />
        <div className="flex-1 min-h-0 flex">
          <div className="flex gap-1 pl-[2px] pb-[3px] shrink-0 pr-px">
            <NavigationPanel />
            <DinPanel />
          </div>
          <Viewport />
          <DockStrip />
        </div>
        <footer className="h-[20px] shrink-0 bg-[#dededc]" />
      </div>
    </div>
  );
}
